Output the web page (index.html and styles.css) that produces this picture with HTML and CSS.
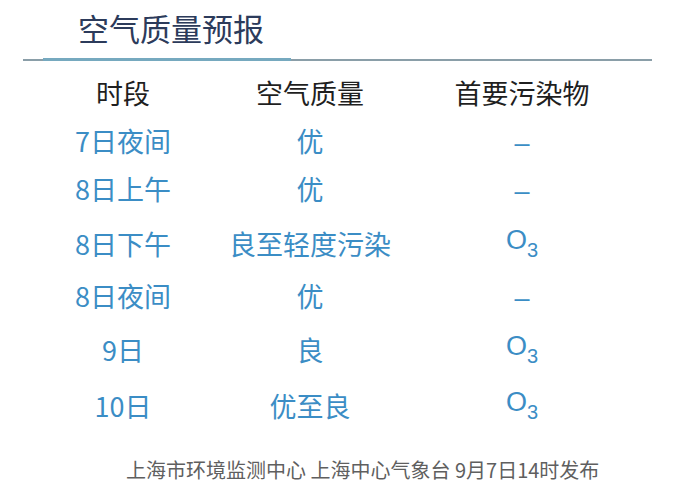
FILE: index.html
```html
<!DOCTYPE html>
<html lang="zh-CN">
<head>
<meta charset="utf-8">
<title>空气质量预报</title>
<link rel="stylesheet" href="styles.css">
</head>
<body>
<div class="page">
  <h1 class="title">空气质量预报</h1>
  <div class="rule"><div class="rule-accent"></div></div>
  <div class="table">
    <div class="cell head">时段</div>
    <div class="cell head">空气质量</div>
    <div class="cell head">首要污染物</div>

    <div class="cell">7日夜间</div>
    <div class="cell">优</div>
    <div class="cell dash">–</div>

    <div class="cell">8日上午</div>
    <div class="cell">优</div>
    <div class="cell dash">–</div>

    <div class="cell">8日下午</div>
    <div class="cell">良至轻度污染</div>
    <div class="cell chem">O<span class="sub">3</span></div>

    <div class="cell">8日夜间</div>
    <div class="cell">优</div>
    <div class="cell dash">–</div>

    <div class="cell">9日</div>
    <div class="cell">良</div>
    <div class="cell chem">O<span class="sub">3</span></div>

    <div class="cell">10日</div>
    <div class="cell">优至良</div>
    <div class="cell chem">O<span class="sub">3</span></div>
  </div>
  <p class="footer">上海市环境监测中心 上海中心气象台 9月7日14时发布</p>
</div>
</body>
</html>
```

FILE: styles.css
```css
html, body {
  margin: 0;
  padding: 0;
  background: #ffffff;
}

.page {
  width: 677px;
  height: 500px;
  overflow: hidden;
  font-family: "Noto Sans CJK SC", "Noto Sans", sans-serif;
}

.title {
  margin: 0;
  padding: 12px 0 0 78px;
  font-size: 31px;
  line-height: 31px;
  font-weight: 400;
  color: #2c3b5b;
}

.rule {
  margin: 16px 25px 0 23px;
  height: 2px;
  background: #8a9ea8;
}

.rule-accent {
  margin-left: 20px;
  width: 248px;
  height: 3px;
  position: relative;
  top: -1px;
  background: #76a9bf;
}

.table {
  display: grid;
  grid-template-columns: 186px 188px 236px;
  grid-template-rows: 48px 48px 48px 62px 42px 66px 46px;
  padding: 7px 37px 0 30px;
  align-items: center;
  justify-items: center;
}

.cell {
  font-size: 27px;
  line-height: 27px;
  color: #3b8dc5;
  white-space: nowrap;
}

.cell.head {
  color: #1f1f1f;
}

.cell.dash {
  font-family: "Liberation Sans", sans-serif;
  padding-top: 6px;
}

.cell.chem {
  font-family: "Liberation Sans", sans-serif;
  font-size: 27px;
  line-height: 27px;
}

.sub {
  font-size: 20px;
  line-height: 20px;
  vertical-align: -8px;
}

.footer {
  margin: 32px 0 0 126px;
  font-size: 20px;
  line-height: 20px;
  color: #5f5f5f;
}
```
